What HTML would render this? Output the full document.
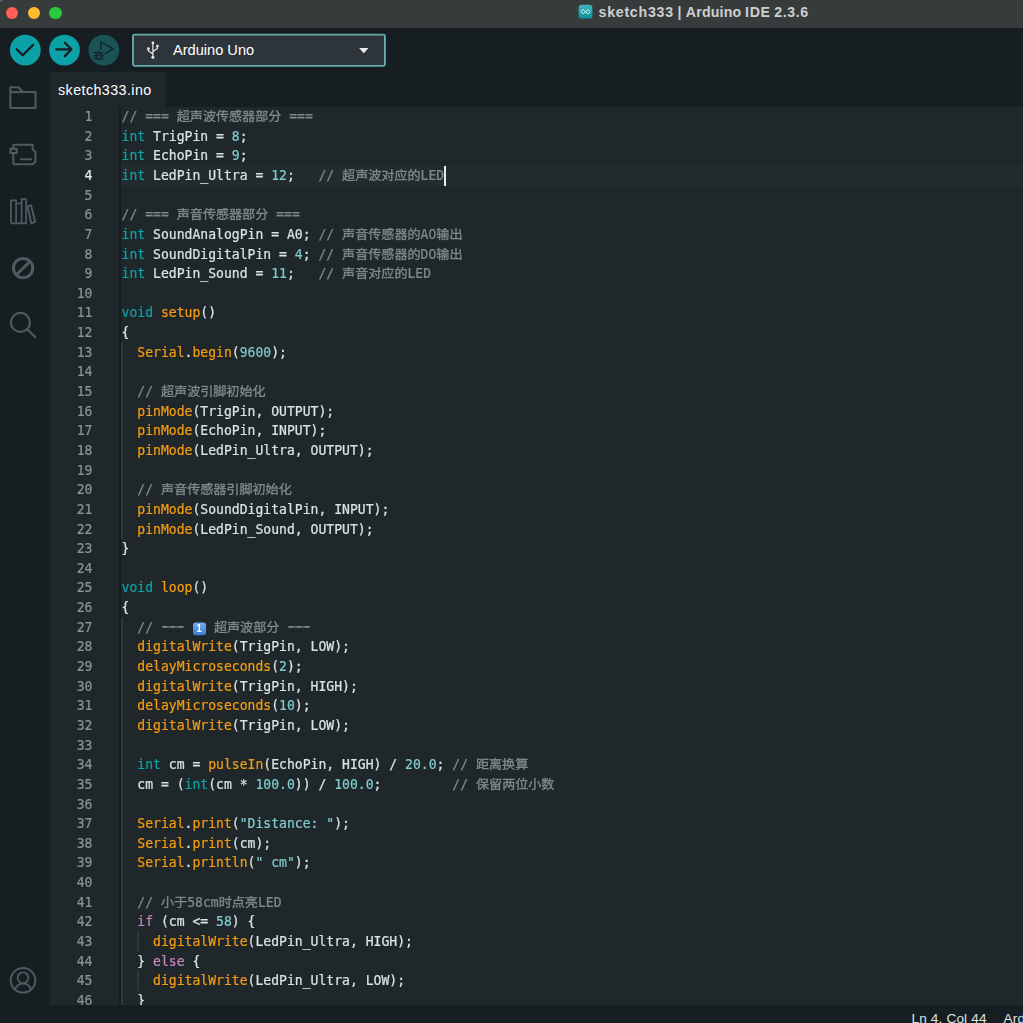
<!DOCTYPE html>
<html lang="zh">
<head>
<meta charset="utf-8">
<title>sketch333 | Arduino IDE 2.3.6</title>
<style>
html,body{margin:0;padding:0;}
body{width:1023px;height:1023px;overflow:hidden;background:#1f272a;position:relative;font-family:"Liberation Sans","Noto Sans CJK SC",sans-serif;}
.abs{position:absolute;}
#titlebar{left:0;top:0;width:1023px;height:28px;background:#383b3c;}
#titlebar .dot{position:absolute;top:6.6px;width:12.6px;height:12.6px;border-radius:50%;}
#title{position:absolute;left:598.5px;top:4.3px;font-size:14.2px;font-weight:bold;color:#cdcfcf;white-space:nowrap;letter-spacing:0.6px;word-spacing:-0.8px;line-height:17px;}
#toolbar{left:0;top:28px;width:1023px;height:44px;background:#171e21;}
#sidebar{left:0;top:72px;width:50px;height:951px;background:#171e21;}
#tabbar{left:50px;top:72px;width:973px;height:35px;background:#171e21;}
#tab{left:50px;top:72px;width:116px;height:35px;background:#1f272a;}
#tabtxt{left:58px;top:82px;font-size:14.3px;color:#ffffff;white-space:nowrap;line-height:17px;letter-spacing:0.42px;}
#editor{left:50px;top:107px;width:973px;height:898px;background:#1f272a;overflow:hidden;}
#status{left:0;top:1005px;width:1023px;height:18px;background:#171e21;}
#status span{position:absolute;top:5.6px;font-size:13.6px;color:#dae3e3;white-space:nowrap;line-height:16px;letter-spacing:0.15px;}
.tb{position:absolute;top:34.7px;width:30.8px;height:30.8px;border-radius:50%;background:#0ca1a6;}
#board{left:132px;top:33.7px;width:250.2px;height:29.4px;border:1.85px solid #6ab2b6;background:#2e353a;border-radius:2.5px;box-shadow:0 0 0 1px #10161a;}
#boardtxt{left:173px;top:42px;font-size:14.6px;color:#ffffff;white-space:nowrap;line-height:17px;}
.ln{transform:scaleY(1.06);transform-origin:0 14px;-webkit-text-stroke:0.22px;position:absolute;left:50px;width:42.4px;text-align:right;font-family:"DejaVu Sans Mono","Liberation Mono",monospace;font-size:13.09px;line-height:19.644px;height:19.644px;color:#8b9394;white-space:pre;}
.ln.cur{color:#e6ecec;}
.cl{transform:scaleY(1.06);transform-origin:0 14px;-webkit-text-stroke:0.22px;position:absolute;left:121.6px;font-family:"DejaVu Sans Mono","Liberation Mono","Noto Sans CJK SC",monospace;font-size:13.09px;line-height:19.644px;height:19.644px;color:#dae3e3;white-space:pre;}
.z{font-family:"Noto Sans CJK SC",sans-serif;line-height:0;-webkit-text-stroke:0.3px;display:inline-block;transform:translateY(0.3px) scaleY(0.89);}
.c{color:#7f8c8d;}
.k{color:#0ca1a6;}
.f{color:#f39c12;}
.n{color:#7fcbcd;}
.p{color:#c586c0;}
.e{display:inline-block;width:13px;height:12.2px;line-height:12.2px;font-size:9.5px;font-weight:bold;text-align:center;color:#fff;background:linear-gradient(#6fb0ee,#3c7bd0);border-radius:2.6px;vertical-align:0.5px;margin:0 0.3px;-webkit-text-stroke:0;font-family:"Liberation Sans",sans-serif;text-shadow:none;}
.d{background:linear-gradient(to bottom,transparent 7.5px,rgba(127,140,141,0.62) 7.5px,rgba(127,140,141,0.62) 9.6px,transparent 9.6px) no-repeat;background-size:calc(100% - 1.6px) 100%;background-position:0.8px 0;position:relative;top:-0.6px;}
#gline{left:119.1px;top:107px;width:2.1px;height:898px;background:#151b1e;}
#curline{left:121.2px;top:165.4px;width:902px;height:20.2px;background:#232b2e;}
#cursor{left:443.6px;top:166px;width:2px;height:19.7px;background:#e6ecec;}
.ig{position:absolute;width:2px;background:#31383b;}
</style>
</head>
<body>
<div id="titlebar" class="abs">
  <div class="dot" style="left:5.75px;background:#ff5f57;"></div>
  <div class="dot" style="left:27.600px;background:#febc2e;"></div>
  <div class="dot" style="left:49.400px;background:#28c840;"></div>
  <svg class="abs" style="left:578px;top:4px" width="16" height="16" viewBox="0 0 16 16"><defs><linearGradient id="ag" x1="0" y1="0" x2="0" y2="1"><stop offset="0" stop-color="#3fb6bb"/><stop offset="1" stop-color="#0f8f97"/></linearGradient></defs><rect x="0.600" y="0.800" width="13.800" height="13.800" rx="3.200" fill="url(#ag)"/><path d="M3.300 7.700c0-1.100.9-1.900 1.900-1.900 1.500 0 3.100 3.800 4.600 3.800 1 0 1.900-.8 1.900-1.900s-.9-1.900-1.900-1.900c-1.500 0-3.100 3.800-4.600 3.800-1 0-1.900-.8-1.900-1.900z" fill="none" stroke="#e9f6f6" stroke-width="1"/></svg>
  <div id="title"><span style="letter-spacing:0.74px">sketch333</span> | <span style="letter-spacing:0.16px">Arduino</span> IDE 2.3.6</div>
</div>
<div id="toolbar" class="abs"></div>
<div class="abs" style="left:0;top:27.500px;width:1023px;height:1.500px;background:#12181b;"></div>
<svg class="abs" style="left:0;top:0" width="5" height="4" viewBox="0 0 5 4"><path d="M0 0h3.400C1.600 0.500 0.500 1.400 0 2.600z" fill="#6c6e6e"/></svg>
<svg class="abs" style="left:0;top:28px" width="400" height="44" viewBox="0 28 400 44">
<circle cx="25.300" cy="50.100" r="15.400" fill="#0ca1a6"/>
<circle cx="64.500" cy="50.100" r="15.400" fill="#0ca1a6"/>
<circle cx="103.800" cy="50.100" r="15.400" fill="#1b5458"/>
<path d="M16.700 49.200l6.100 6.100 10.300-10.400" fill="none" stroke="#171e21" stroke-width="2.300" stroke-linecap="round" stroke-linejoin="round"/>
<path d="M56.300 49.300h15M64.900 42.700l6.500 6.600-6.500 6.800" fill="none" stroke="#171e21" stroke-width="2.300" stroke-linecap="round" stroke-linejoin="round"/>
<path d="M100.800 49.400V41.900L113 48.750l-7.700 4.650" fill="none" stroke="#14272a" stroke-width="1.500" stroke-linecap="round" stroke-linejoin="round"/>
<ellipse cx="98.650" cy="55.900" rx="2.250" ry="3.700" fill="none" stroke="#14272a" stroke-width="1.500"/>
<path d="M96.700 55h3.900" stroke="#14272a" stroke-width="1.300" fill="none"/>
<path d="M96.700 54l-2.300-1.600M96.600 55.800h-2.700M96.700 57.600l-2.300 1.600M100.600 54l2.300-1.600M100.700 55.800h2.700M100.600 57.600l2.300 1.600" stroke="#14272a" stroke-width="1.400" stroke-linecap="round" fill="none"/>
<rect x="131.500" y="33.200" width="254.900" height="34.100" rx="3" fill="#10161a"/>
<rect x="132.950" y="34.650" width="252" height="31.200" rx="1.500" fill="#2e353a" stroke="#64abaf" stroke-width="1.900"/>
<g transform="translate(145,40)"><path d="M7.900 2.900V17.300M3.400 8.700v2l4.500 3.300M12.400 6.100v2.400l-4.500 3" fill="none" stroke="#e6e8e8" stroke-width="1.250" stroke-linejoin="round"/><circle cx="7.900" cy="17.300" r="1.550" fill="#e6e8e8"/><circle cx="7.900" cy="2.900" r="1.350" fill="#e6e8e8"/><circle cx="3.400" cy="8.700" r="1.400" fill="#e6e8e8"/><circle cx="12.400" cy="6.100" r="1.400" fill="#e6e8e8"/></g>
<path d="M359.300 47.900h9l-4.500 5z" fill="#ebebeb"/>
</svg>
<div id="boardtxt" class="abs">Arduino Uno</div>
<svg class="abs" style="left:357px;top:46px" width="14" height="8" viewBox="0 0 14 8"><path d="M2.300 1.900h9l-4.500 5z" fill="#ebebeb"/></svg>
<div id="sidebar" class="abs"></div>
<div id="tabbar" class="abs"></div>
<div id="tab" class="abs"></div>
<div id="tabtxt" class="abs">sketch333.ino</div>
<div id="editor" class="abs"></div>
<div id="curline" class="abs"></div>
<div id="gline" class="abs"></div>
<div id="code" style="position:absolute;left:0;top:0;width:1023px;height:1005px;overflow:hidden;will-change:transform;">
<div class="ln" style="top:107.00px">1</div>
<div class="cl" style="top:107.00px"><span class="c">// === <span class="z">超声波传感器部分</span> ===</span></div>
<div class="ln" style="top:126.64px">2</div>
<div class="cl" style="top:126.64px"><span class="k">int</span> TrigPin = <span class="n">8</span>;</div>
<div class="ln" style="top:146.29px">3</div>
<div class="cl" style="top:146.29px"><span class="k">int</span> EchoPin = <span class="n">9</span>;</div>
<div class="ln cur" style="top:165.93px">4</div>
<div class="cl" style="top:165.93px"><span class="k">int</span> LedPin_Ultra = <span class="n">12</span>;   <span class="c">// <span class="z">超声波对应的</span>LED</span></div>
<div class="ln" style="top:185.58px">5</div>
<div class="ln" style="top:205.22px">6</div>
<div class="cl" style="top:205.22px"><span class="c">// === <span class="z">声音传感器部分</span> ===</span></div>
<div class="ln" style="top:224.86px">7</div>
<div class="cl" style="top:224.86px"><span class="k">int</span> SoundAnalogPin = A0; <span class="c">// <span class="z">声音传感器的</span>AO<span class="z">输出</span></span></div>
<div class="ln" style="top:244.51px">8</div>
<div class="cl" style="top:244.51px"><span class="k">int</span> SoundDigitalPin = <span class="n">4</span>; <span class="c">// <span class="z">声音传感器的</span>DO<span class="z">输出</span></span></div>
<div class="ln" style="top:264.15px">9</div>
<div class="cl" style="top:264.15px"><span class="k">int</span> LedPin_Sound = <span class="n">11</span>;   <span class="c">// <span class="z">声音对应的</span>LED</span></div>
<div class="ln" style="top:283.80px">10</div>
<div class="ln" style="top:303.44px">11</div>
<div class="cl" style="top:303.44px"><span class="k">void</span> <span class="f">setup</span>()</div>
<div class="ln" style="top:323.08px">12</div>
<div class="cl" style="top:323.08px">{</div>
<div class="ln" style="top:342.73px">13</div>
<div class="cl" style="top:342.73px">  <span class="f">Serial</span>.<span class="f">begin</span>(<span class="n">9600</span>);</div>
<div class="ln" style="top:362.37px">14</div>
<div class="ln" style="top:382.02px">15</div>
<div class="cl" style="top:382.02px">  <span class="c">// <span class="z">超声波引脚初始化</span></span></div>
<div class="ln" style="top:401.66px">16</div>
<div class="cl" style="top:401.66px">  <span class="f">pinMode</span>(TrigPin, OUTPUT);</div>
<div class="ln" style="top:421.30px">17</div>
<div class="cl" style="top:421.30px">  <span class="f">pinMode</span>(EchoPin, INPUT);</div>
<div class="ln" style="top:440.95px">18</div>
<div class="cl" style="top:440.95px">  <span class="f">pinMode</span>(LedPin_Ultra, OUTPUT);</div>
<div class="ln" style="top:460.59px">19</div>
<div class="ln" style="top:480.24px">20</div>
<div class="cl" style="top:480.24px">  <span class="c">// <span class="z">声音传感器引脚初始化</span></span></div>
<div class="ln" style="top:499.88px">21</div>
<div class="cl" style="top:499.88px">  <span class="f">pinMode</span>(SoundDigitalPin, INPUT);</div>
<div class="ln" style="top:519.52px">22</div>
<div class="cl" style="top:519.52px">  <span class="f">pinMode</span>(LedPin_Sound, OUTPUT);</div>
<div class="ln" style="top:539.17px">23</div>
<div class="cl" style="top:539.17px">}</div>
<div class="ln" style="top:558.81px">24</div>
<div class="ln" style="top:578.46px">25</div>
<div class="cl" style="top:578.46px"><span class="k">void</span> <span class="f">loop</span>()</div>
<div class="ln" style="top:598.10px">26</div>
<div class="cl" style="top:598.10px">{</div>
<div class="ln" style="top:617.74px">27</div>
<div class="cl" style="top:617.74px">  <span class="c">// </span><span class="c d">---</span><span class="c"> </span><span class="e">1</span><span class="c"> <span class="z">超声波部分</span> </span><span class="c d">---</span></div>
<div class="ln" style="top:637.39px">28</div>
<div class="cl" style="top:637.39px">  <span class="f">digitalWrite</span>(TrigPin, LOW);</div>
<div class="ln" style="top:657.03px">29</div>
<div class="cl" style="top:657.03px">  <span class="f">delayMicroseconds</span>(<span class="n">2</span>);</div>
<div class="ln" style="top:676.68px">30</div>
<div class="cl" style="top:676.68px">  <span class="f">digitalWrite</span>(TrigPin, HIGH);</div>
<div class="ln" style="top:696.32px">31</div>
<div class="cl" style="top:696.32px">  <span class="f">delayMicroseconds</span>(<span class="n">10</span>);</div>
<div class="ln" style="top:715.96px">32</div>
<div class="cl" style="top:715.96px">  <span class="f">digitalWrite</span>(TrigPin, LOW);</div>
<div class="ln" style="top:735.61px">33</div>
<div class="ln" style="top:755.25px">34</div>
<div class="cl" style="top:755.25px">  <span class="k">int</span> cm = <span class="f">pulseIn</span>(EchoPin, HIGH) / <span class="n">20.0</span>; <span class="c">// <span class="z">距离换算</span></span></div>
<div class="ln" style="top:774.90px">35</div>
<div class="cl" style="top:774.90px">  cm = (<span class="k">int</span>(cm * <span class="n">100.0</span>)) / <span class="n">100.0</span>;         <span class="c">// <span class="z">保留两位小数</span></span></div>
<div class="ln" style="top:794.54px">36</div>
<div class="ln" style="top:814.18px">37</div>
<div class="cl" style="top:814.18px">  <span class="f">Serial</span>.<span class="f">print</span>(<span class="n">"Distance: "</span>);</div>
<div class="ln" style="top:833.83px">38</div>
<div class="cl" style="top:833.83px">  <span class="f">Serial</span>.<span class="f">print</span>(cm);</div>
<div class="ln" style="top:853.47px">39</div>
<div class="cl" style="top:853.47px">  <span class="f">Serial</span>.<span class="f">println</span>(<span class="n">" cm"</span>);</div>
<div class="ln" style="top:873.12px">40</div>
<div class="ln" style="top:892.76px">41</div>
<div class="cl" style="top:892.76px">  <span class="c">// <span class="z">小于</span>58cm<span class="z">时点亮</span>LED</span></div>
<div class="ln" style="top:912.40px">42</div>
<div class="cl" style="top:912.40px">  <span class="p">if</span> (cm &lt;= <span class="n">58</span>) {</div>
<div class="ln" style="top:932.05px">43</div>
<div class="cl" style="top:932.05px">    <span class="f">digitalWrite</span>(LedPin_Ultra, HIGH);</div>
<div class="ln" style="top:951.69px">44</div>
<div class="cl" style="top:951.69px">  } <span class="p">else</span> {</div>
<div class="ln" style="top:971.34px">45</div>
<div class="cl" style="top:971.34px">    <span class="f">digitalWrite</span>(LedPin_Ultra, LOW);</div>
<div class="ln" style="top:990.98px">46</div>
<div class="cl" style="top:990.98px">  }</div>
</div>
<div id="cursor" class="abs"></div>
<div class="ig" style="left:121px;top:343px;height:196px;"></div>
<div class="ig" style="left:121px;top:618px;height:387px;"></div>
<div class="ig" style="left:137px;top:932px;height:19.500px;"></div>
<div class="ig" style="left:137px;top:971px;height:19.500px;"></div>
<!-- sidebar icons -->
<svg class="abs" style="left:0;top:72px" width="50" height="280" viewBox="0 0 50 280" fill="none" stroke="#4e5b61" stroke-width="2" stroke-linejoin="round">
  <path d="M10.300 35.900V15.300h8.100l4.400 4.800h12.800v15.800z"/><path d="M10.300 20.100h13"/>
  <path d="M13.300 73.800a1 1 0 0 1 1-1H32.700v4.700l2.700 2.200v10.100l-2.700 2.400H14.300a1 1 0 0 1-1-1z"/><rect x="10.500" y="76.800" width="6.300" height="4.300" fill="#171e21"/><path d="M21 87.200h10" stroke-linecap="round"/>
  <g stroke-width="1.700"><path d="M10.900 151.400V128.300h5.200V151.400M16.100 131.500h5.500M21.600 151.400V127.100h4.500V151.400zM10.900 151.400h15.200M16.100 151.400V131"/><path d="M27.500 134.300l3.500-1 4.200 16.500-4 1.500z" stroke-width="1.900"/></g>
  <circle cx="23.100" cy="196.100" r="9.700" stroke-width="3"/><path d="M16.200 203l13.800-13.800" stroke-width="3"/>
  <circle cx="20.400" cy="250.400" r="9.500" stroke-width="2.100"/><path d="M27.200 257.300l8 7.700" stroke-width="2.100" stroke-linecap="round"/>
</svg>
<svg class="abs" style="left:9px;top:966px" width="28" height="29" viewBox="0 0 28 29" fill="none" stroke="#4e5b61" stroke-width="1.900"><circle cx="14" cy="14.300" r="12.300"/><circle cx="14" cy="11.800" r="5.400"/><path d="M5.900 23.400c1.500-3.800 4.600-5.900 8.100-5.900s6.600 2.100 8.100 5.900"/></svg>
<div id="status" class="abs"><span style="left:911.500px;">Ln 4, Col 44</span><span style="left:1003.500px;">Arduino Uno</span></div>
</body>
</html>
